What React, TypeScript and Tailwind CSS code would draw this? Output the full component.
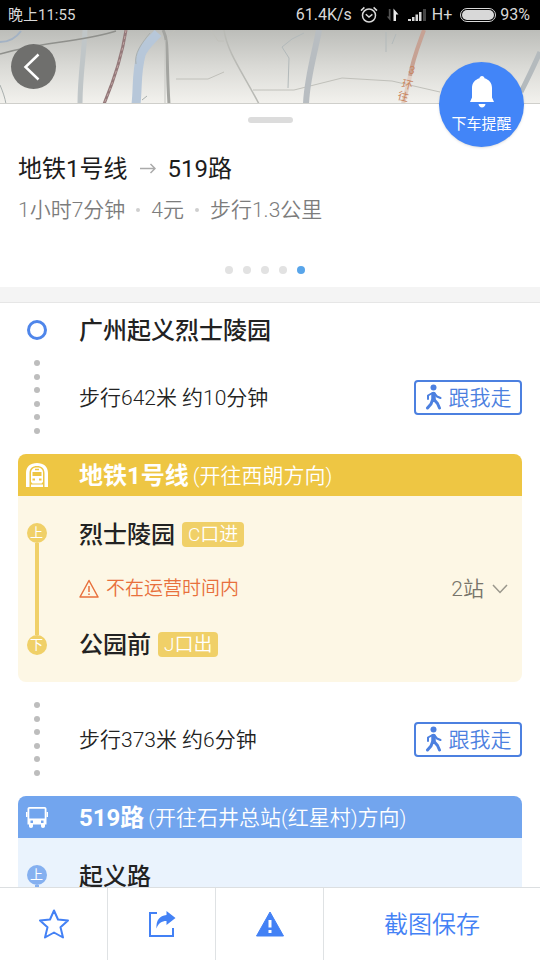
import React from 'react';
import clsx from 'clsx';

type Tone = 'yellow' | 'blue';

const tones = {
  yellow: {
    header: 'bg-[#eec643]',
    body: 'bg-[#fdf7e5]',
    mark: 'bg-[#f0d068]',
  },
  blue: {
    header: 'bg-[#72a5ee]',
    body: 'bg-[#eaf3fd]',
    mark: 'bg-[#85b0f0]',
  },
};

const StatusBar: React.FC = () => (
  <div className="flex h-[30px] shrink-0 items-center justify-between bg-black pr-2.5 pl-2 text-[#d8d8d8]">
    <span className="text-[15px]">晚上11:55</span>
    <div className="flex items-center text-base">
      <span>61.4K/s</span>
      <svg className="ml-2 h-[18px] w-[18px]" viewBox="0 0 18 18" fill="none" stroke="currentColor" strokeWidth="1.5">
        <circle cx="9" cy="9.5" r="6.5" />
        <path d="M5.8 8.2L9 11l3.4-2.6M1 4.6L4.4 1.4M17 4.6L13.6 1.4" />
      </svg>
      <svg className="ml-2 h-4 w-3.5" viewBox="0 0 14 16">
        <path d="M4.5 2v12L.8 9.6h2V2z" fill="#555" />
        <path d="M7.5 14V1.5l5 6H10V14z" fill="#e8e8e8" />
      </svg>
      <svg className="ml-2 h-4 w-[18px]" viewBox="0 0 18 16" fill="#d8d8d8">
        <path d="M0 14v-2h3v2zM4 14v-4h2.5v4zM7.5 14V7.5H10V14zM11 14V5h2.500v9z" />
        <path d="M15 14V2h3v12z" fill="#444" />
      </svg>
      <span className="ml-1.5">H+</span>
      <span className="ml-2 flex h-3.5 w-9 rounded-full border border-[#d8d8d8] p-px">
        <span className="flex-1 rounded-full bg-[#d8d8d8]" />
      </span>
      <span className="ml-1">93%</span>
    </div>
  </div>
);

const MapStrip: React.FC = () => (
  <div className="relative h-[74px] shrink-0 border-b border-[#cfcfcb]">
    <svg className="h-full w-full" viewBox="0 0 540 74" preserveAspectRatio="xMidYMin slice" fill="none">
      <defs>
        <linearGradient id="shade" x1="0" y1="0" x2="0" y2="1">
          <stop offset="0" stopColor="#bcbdb9" />
          <stop offset="0.5" stopColor="#dadad6" />
          <stop offset="1" stopColor="#f3f2ee" />
        </linearGradient>
      </defs>
      <rect width="540" height="74" fill="url(#shade)" />
      <path d="M85 0C84 25 80 45 80 74" stroke="#c0c6c8" strokeWidth="5" />
      <path d="M158 3C150 12 143 17 141 25C136 44 138 58 136 74" stroke="#b7c7d9" strokeWidth="9" />
      <path d="M0 12C8 12 16 8 21 1" stroke="#a3b2c4" strokeWidth="2" />
      <path d="M0 24C25 17 45 14 68 11C88 8 104 5 116 1" stroke="#8f908c" strokeWidth="1.5" />
      <path d="M126 0C122 26 114 50 104 74" stroke="#94797a" strokeWidth="3" />
      <path d="M126 0C122 26 114 50 104 74" stroke="#c0a5a3" strokeWidth="1" strokeDasharray="3 3" />
      <path d="M150 3C141 14 134 24 136 34M0 55C3 62 5 68 6 74M142 70l5-4" stroke="#a9afae" strokeWidth="1" />
      <path d="M163 0C169 11 166 26 169 74" stroke="#a3a4a0" strokeWidth="3" />
      <path d="M165 10V74" stroke="#c6c7c3" strokeWidth="1" />
      <path d="M175 0L168 7M176 49H208L224 42M211 0L218 11H224M253 60L294 60L342 48L392 51L440 62" stroke="#c0c0ba" strokeWidth="1" />
      <path d="M224 0C227 22 243 43 259 74" stroke="#b9bab5" strokeWidth="1.5" />
      <path d="M282 17L292 9L304 3M282 17L289 28L288 58M386 2V22M396 4L392 14" stroke="#b2b9ba" strokeWidth="1" />
      <path d="M319 0C315 22 307 48 306 74" stroke="#b8bdc1" strokeWidth="6" />
      <path d="M424 0C419 14 413 28 410 46" stroke="#c6a294" strokeWidth="4" />
      <path d="M410 46C408 56 405 66 403 74" stroke="#e2cfc4" strokeWidth="4" />
      <path d="M540 22C533 38 529 46 521 62" stroke="#b4babd" strokeWidth="5" />
      <g fill="#c98560" fontSize="11">
        <text transform="translate(408 43) rotate(14)">3</text>
        <text transform="translate(401 57) rotate(14)">环</text>
        <text transform="translate(397 69) rotate(14)">往</text>
      </g>
    </svg>
    <button
      type="button"
      aria-label="返回"
      className="absolute top-3.5 left-[11px] flex h-[45px] w-[45px] items-center justify-center rounded-full bg-[#6f6f6d]"
    >
      <svg className="h-[45px] w-[45px]" viewBox="0 0 45 45" fill="none" stroke="#fff" strokeWidth="2.5">
        <path d="M27.5 10.5L14.5 23L27.5 35.5" />
      </svg>
    </button>
    <button
      type="button"
      className="absolute top-8 right-4 z-10 flex h-[85px] w-[85px] flex-col items-center rounded-full bg-[#4285f8] pt-3.5 text-white shadow"
    >
      <svg className="h-8 w-6" viewBox="0 0 24 32" fill="currentColor">
        <path d="M12 0c1.5 0 2.3 1 2.5 2.2C19 3.5 22 7 22 12v9.500l2 4.500H0l2-4.500V12C2 7 5 3.500 9.500 2.200C9.700 1 10.500 0 12 0zM8.500 28h7c-.4 2.200-1.600 3.500-3.500 3.500S8.900 30.200 8.500 28z" />
      </svg>
      <span className="mt-1.5 text-[15px] leading-5">下车提醒</span>
    </button>
  </div>
);

const Separator: React.FC = () => <span className="mx-[11px] h-1 w-1 rounded-full bg-[#cfcfcf]" />;

const RouteSummary: React.FC = () => (
  <section className="shrink-0 bg-white px-[18px] py-[13px]">
    <div className="mx-auto h-1.5 w-[45px] rounded-full bg-[#dcdcdc]" />
    <h1 className="mt-[30px] flex items-center text-2xl text-[#1c1c1c]">
      地铁1号线
      <svg className="mx-3 h-4 w-4" viewBox="0 0 16 16" fill="none" stroke="#aaa" strokeWidth="1.5">
        <path d="M0 7.5H15M10.5 3L15 7.5L10.5 12" />
      </svg>
      519路
    </h1>
    <p className="mt-[11px] flex items-center text-[21px] leading-7 font-[350] text-[#7c7c7c]">
      1小时7分钟
      <Separator />
      4元
      <Separator />
      步行1.3公里
    </p>
    <div className="mt-[42px] flex justify-center">
      {[0, 1, 2, 3, 4].map((i) => (
        <span key={i} className={clsx('mr-2.5 h-2 w-2 rounded-full', i === 4 ? 'bg-[#58a5ea]' : 'bg-[#e2e2e2]')} />
      ))}
    </div>
  </section>
);

const WalkStep: React.FC<{ text: string }> = ({ text }) => (
  <div className="mb-5 flex items-center">
    <div className="flex h-[74px] w-[37px] shrink-0 flex-col items-center justify-between">
      {[...Array(6)].map((_, i) => (
        <span key={i} className="h-1.5 w-1.5 rounded-full bg-[#bdbdbd]" />
      ))}
    </div>
    <p className="flex-1 pt-0.5 pl-6 text-[21px] leading-7 font-[350] text-[#222]">{text}</p>
    <button
      type="button"
      className="flex h-[35px] w-[108px] items-center justify-center gap-1.5 rounded border-2 border-[#4c80e0] text-[21px] leading-7 font-[350] text-[#4c80e0]"
    >
      <svg className="h-[26px] w-[18px]" viewBox="0 0 18 26" fill="none" stroke="currentColor" strokeLinecap="round" strokeLinejoin="round">
        <circle cx="8.5" cy="3.5" r="3" fill="currentColor" stroke="none" />
        <path d="M8.5 10V15" strokeWidth="4.5" />
        <path d="M7.5 9L3 11.5V15M9.500 9.500L12 12.500L15.500 14" strokeWidth="2" />
        <path d="M7.5 16L6 20L2.5 24M9 15.5L12.5 19.5L14.5 24" strokeWidth="3" />
      </svg>
      <span className="pt-0.5">跟我走</span>
    </button>
  </div>
);

const TrainIcon: React.FC = () => (
  <svg className="h-6 w-[22px]" viewBox="0 0 22 24" fill="#fff">
    <path d="M0 24V10C0 3.5 4.5 0 11 0s11 3.5 11 10v14h-3.500V10c0-4.500-3-7-7.500-7s-7.500 2.500-7.500 7v14z" />
    <path
      fillRule="evenodd"
      d="M11 4.500c4 0 6 2 6 5.500v9l-1.500 1.500h-9L5 19v-9c0-3.500 2-5.500 6-5.500zM6.500 9v4h9V9zM6.500 15.500v2h2.500v-2zM13 15.500v2h2.500v-2zM9 5.800v1.400h4V5.800z"
    />
    <path d="M5 21.500h12V24H5z" />
  </svg>
);

const BusIcon: React.FC = () => (
  <svg className="h-[22px] w-[22px]" viewBox="0 0 22 22" fill="#fff">
    <path
      fillRule="evenodd"
      d="M3.500 1h15c1.300 0 2 .8 2 2v15.500H19V20c0 1.200-.7 2-2 2s-2-.8-2-2v-1.500H7V20c0 1.200-.7 2-2 2s-2-.8-2-2v-1.500H1.500V3c0-1.200.7-2 2-2zM3.300 2.800v9.700h15.400V2.800zM4.500 14.500V17H7v-2.500zM15 14.500V17h2.500v-2.500z"
    />
    <path d="M0 6h1.500v5H0zM20.500 6H22v5h-1.500z" />
  </svg>
);

const LineCard: React.FC<{
  tone: Tone;
  icon: React.ReactNode;
  name: string;
  direction: string;
  open?: boolean;
  children: React.ReactNode;
}> = ({ tone, icon, name, direction, open = false, children }) => (
  <article className="mb-5 overflow-hidden rounded-lg">
    <header className={clsx('flex h-[42px] items-center text-white', tones[tone].header)}>
      <div className="flex w-[37px] shrink-0 justify-center">{icon}</div>
      <h2 className="pt-0.5 pl-6 text-2xl font-bold">{name}</h2>
      <span className="pt-0.5 pl-1 text-[21px] leading-7 font-[350]">{direction}</span>
    </header>
    <div className={clsx('flex min-h-[186px] py-6', tones[tone].body)}>
      <div className="flex w-[37px] shrink-0 flex-col items-center py-[3px] text-[13px] text-white">
        <span className={clsx('flex h-5 w-5 items-center justify-center rounded-full', tones[tone].mark)}>上</span>
        <span className={clsx('w-1 flex-1', tones[tone].mark)} />
        {!open && (
          <span className={clsx('flex h-5 w-5 items-center justify-center rounded-full', tones[tone].mark)}>下</span>
        )}
      </div>
      <div className="flex flex-1 flex-col gap-[27px] pr-3.5 pl-6">{children}</div>
    </div>
  </article>
);

const Stop: React.FC<{ name: string; exit?: string }> = ({ name, exit }) => (
  <div className="flex h-7 items-center gap-[7px]">
    <h3 className="pt-0.5 text-2xl leading-7 font-medium text-[#222]">{name}</h3>
    {exit && (
      <span className="rounded bg-[#f0d068] px-1.5 text-[19px] leading-[25px] font-[350] text-white">{exit}</span>
    )}
  </div>
);

const StopCount: React.FC<{ count: number }> = ({ count }) => (
  <button type="button" className="ml-auto flex items-center gap-2 text-[21px] leading-7 font-[350] text-[#77746a]">
    {count}站
    <svg className="h-4 w-4" viewBox="0 0 16 16" fill="none" stroke="#9a978c" strokeWidth="1.5">
      <path d="M1 4L8 11.5L15 4" />
    </svg>
  </button>
);

const BottomBar: React.FC = () => (
  <nav className="grid h-[73px] shrink-0 grid-cols-5 divide-x divide-[#dfe2e4] border-t border-[#dcdfe1] bg-white text-[#4381f5]">
    <button type="button" aria-label="收藏" className="flex items-center justify-center">
      <svg className="h-[30px] w-[30px]" viewBox="0 0 30 30" fill="none" stroke="currentColor" strokeWidth="2" strokeLinejoin="round">
        <path d="M15 1.5L19 10.5L29 11.5L21.5 18.2L24 28.5L15 23.500L6 28.5L8.500 18.200L1 11.500L11 10.500Z" />
      </svg>
    </button>
    <button type="button" aria-label="分享" className="flex items-center justify-center">
      <svg className="h-7 w-7" viewBox="0 0 28 28" fill="none">
        <path d="M9 3H2V26H25V18" stroke="currentColor" strokeWidth="2" />
        <path d="M18.5 1L27.5 8L18.5 15V11C13.5 11 10.5 13 8.5 18.5C8 10.5 11.5 5.5 18.5 5Z" fill="currentColor" />
      </svg>
    </button>
    <button type="button" aria-label="报错" className="flex items-center justify-center">
      <svg className="h-7 w-[30px]" viewBox="0 0 30 28">
        <path d="M15 2L28.5 26H1.5Z" fill="currentColor" stroke="currentColor" strokeLinejoin="round" />
        <path d="M15 10V17.5M15 20V23" stroke="#fff" strokeWidth="3" />
      </svg>
    </button>
    <button type="button" className="col-span-2 pt-0.5 text-2xl font-[350]">
      截图保存
    </button>
  </nav>
);

export default function App() {
  return (
    <div className="flex h-screen flex-col overflow-hidden bg-white font-[Roboto,'Noto_Sans_CJK_SC',sans-serif]">
      <StatusBar />
      <MapStrip />
      <RouteSummary />
      <div className="h-4 shrink-0 border-b border-[#e6e6e6] bg-[#f4f4f4]" />
      <main className="min-h-0 flex-1 overflow-hidden px-[18px]">
        <div className="flex h-[57px] items-center pb-1">
          <div className="flex w-[37px] shrink-0 justify-center">
            <span className="h-5 w-5 rounded-full border-3 border-[#4f86ea]" />
          </div>
          <h2 className="pt-0.5 pl-6 text-2xl font-medium text-[#222]">广州起义烈士陵园</h2>
        </div>
        <WalkStep text="步行642米 约10分钟" />
        <LineCard tone="yellow" icon={<TrainIcon />} name="地铁1号线" direction="(开往西朗方向)">
          <Stop name="烈士陵园" exit="C口进" />
          <div className="flex h-7 items-center">
            <svg className="h-5 w-5" viewBox="0 0 20 20" fill="none" stroke="#e8703c" strokeWidth="1.5" strokeLinejoin="round">
              <path d="M10 1.5L19 18H1ZM10 7V13M10 14.5V16" />
            </svg>
            <span className="pl-[7px] text-[19px] leading-7 font-[350] text-[#e8703c]">不在运营时间内</span>
            <StopCount count={2} />
          </div>
          <Stop name="公园前" exit="J口出" />
        </LineCard>
        <WalkStep text="步行373米 约6分钟" />
        <LineCard tone="blue" icon={<BusIcon />} name="519路" direction="(开往石井总站(红星村)方向)" open>
          <Stop name="起义路" />
        </LineCard>
      </main>
      <BottomBar />
    </div>
  );
}
